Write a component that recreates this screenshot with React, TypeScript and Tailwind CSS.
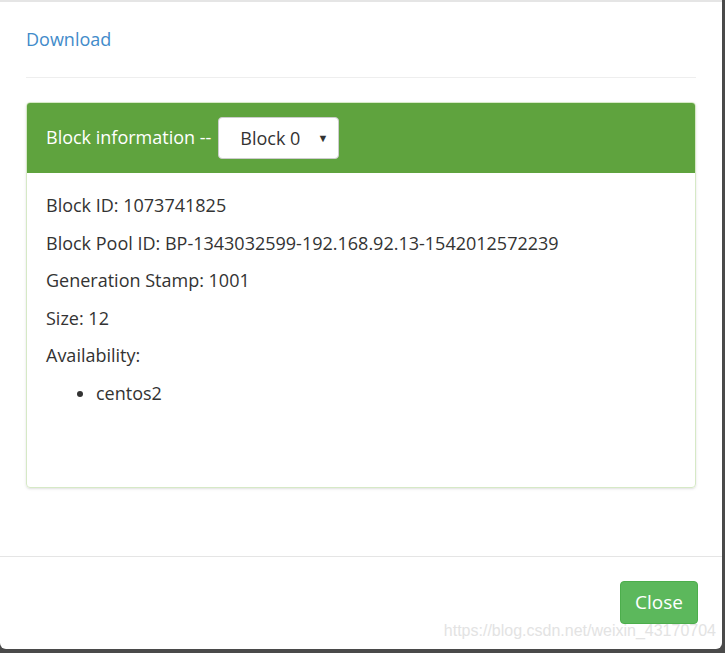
export default function App() {
  const font = { fontFamily: '"Open Sans", "Noto Sans", sans-serif' };
  return (
    <div className="w-[725px] h-[653px] bg-[#4a4a4a] overflow-hidden" style={font}>
      <div className="w-[722px] h-[649px] bg-white rounded-b-md border-t-2 border-[#e5e5e5] flex flex-col">
        <div className="px-[26px] pt-[24px] flex-1">
          <a className="block text-[18px] leading-[27px] text-[#428bca]">Download</a>
          <div className="mt-[24px] border-t border-[#eeeeee]" />
          <div className="mt-[24px] h-[386px] border border-[#d6e9c6] rounded-[4px] shadow-sm flex flex-col">
            <div className="h-[70px] bg-[#5fa33e] rounded-t-[3px] flex items-center pl-[19px] gap-[7px]">
              <span className="text-white text-[18px] -mt-[2px]">Block information --</span>
              <div className="w-[121px] h-[42px] bg-white rounded-[4px] border border-[#cccccc] flex items-center pl-[21px] pr-[10px] justify-between">
                <span className="text-[18px] text-[#333333]">Block 0</span>
                <span className="text-[11px] text-[#333333]">▼</span>
              </div>
            </div>
            <div className="px-[19px] pt-[19px] text-[18px] leading-[27.5px] text-[#333333] flex flex-col gap-[10px]">
              <p>Block ID: 1073741825</p>
              <p>Block Pool ID: BP-1343032599-192.168.92.13-1542012572239</p>
              <p>Generation Stamp: 1001</p>
              <p>Size: 12</p>
              <p>Availability:</p>
              <ul className="list-disc pl-[50px]">
                <li>centos2</li>
              </ul>
            </div>
          </div>
        </div>
        <div className="border-t border-[#e5e5e5] h-[93px] pt-[24px] pr-[24px] flex flex-col items-end relative">
          <button className="w-[78px] h-[43px] bg-[#5cb85c] border border-[#4cae4c] rounded-[4px] text-white text-[19px]">
            Close
          </button>
          <span className="absolute right-[6px] bottom-[6px] text-[16px] text-[#e3e3e3]" style={{ fontFamily: '"Liberation Sans", sans-serif' }}>
            https://blog.csdn.net/weixin_43170704
          </span>
        </div>
      </div>
    </div>
  );
}
